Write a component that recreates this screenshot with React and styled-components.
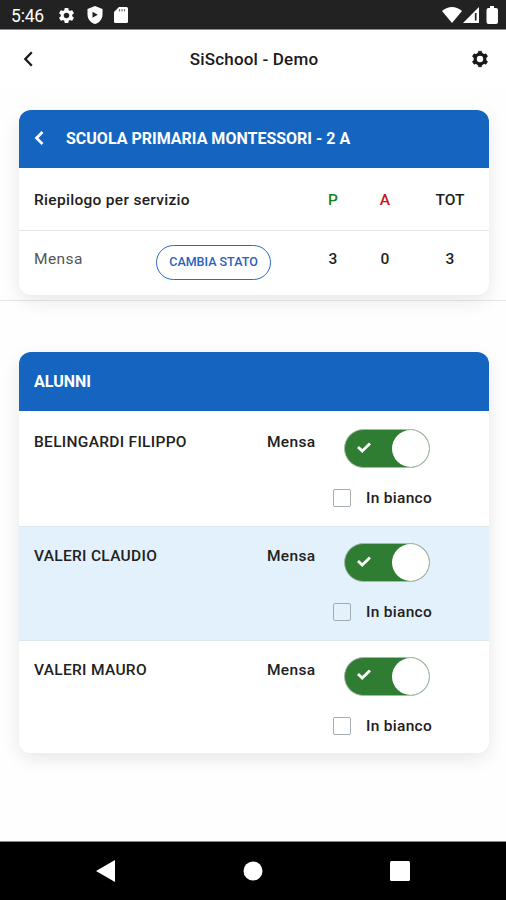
import styled, { createGlobalStyle } from "styled-components";
import { MdSettings } from "react-icons/md";

const GlobalStyle = createGlobalStyle`
  * {
    box-sizing: border-box;
  }
  body {
    margin: 0;
    background: #fefefe;
    font-family: Roboto, sans-serif;
    color: #212121;
  }
  button {
    font-family: inherit;
    padding: 0;
    border: 0;
    background: none;
  }
`;

const Screen = styled.div`
  display: flex;
  flex-direction: column;
  width: 506px;
  height: 900px;
  overflow: hidden;
`;

const StatusBar = styled.div`
  display: flex;
  align-items: center;
  justify-content: space-between;
  height: 30px;
  padding: 1px 7px 0 11px;
  background: #222;
  border-bottom: 1px solid #8b8b8b;
  color: #fff;
`;

const StatusGroup = styled.div`
  display: flex;
  align-items: center;
  gap: ${(props) => props.$gap}px;
`;

const Clock = styled.span`
  width: 35px;
  margin-top: 2px;
  font-size: 17.5px;
  letter-spacing: -0.2px;
`;

const Icon = styled.svg`
  display: block;
  flex-shrink: 0;
`;

const Header = styled.header`
  display: grid;
  grid-template-columns: 24px 1fr 20px;
  align-items: center;
  height: 60px;
  padding: 0 16px 2px 16px;
  border-bottom: 1px solid #fbfbfb;
  background: #fff;
  color: #1a1a1a;
`;

const Title = styled.h1`
  margin: 0 2px 0 0;
  font-size: 17px;
  font-weight: 500;
  letter-spacing: 0.18px;
  text-align: center;
`;

const Summary = styled.section`
  height: 211px;
  padding: 20px 17px 0 19px;
  border-bottom: 1px solid #e6e6e6;
`;

const Students = styled.section`
  flex: 1;
  padding: 51px 17px 0 19px;
`;

const Card = styled.div`
  overflow: hidden;
  border-radius: 12px;
  background: #fff;
  box-shadow: 0 6px 18px rgba(0, 0, 0, 0.09);
`;

const CardHeader = styled.div`
  display: flex;
  align-items: center;
  gap: 20px;
  height: ${(props) => props.$height}px;
  padding: 0 15px;
  padding-bottom: ${(props) => props.$lift || 0}px;
  background: #1565c0;
  color: #fff;
`;

const CardTitle = styled.h2`
  margin: 0;
  font-size: 16px;
  font-weight: 700;
`;

const SummaryRow = styled.div`
  display: grid;
  grid-template-columns: 122px 159px 36px 68px 62px;
  align-items: center;
  height: ${(props) => props.$height}px;
  padding: 1px 8px 0 15px;
  border-top: ${(props) => (props.$line ? "1px solid #e4e9ec" : "0")};
`;

const RowTitle = styled.span`
  grid-column: span 2;
  font-size: 15.5px;
  font-weight: 500;
  letter-spacing: 0.3px;
`;

const Service = styled.span`
  margin-top: -10px;
  color: #555;
  font-size: 15.5px;
  letter-spacing: 0.4px;
`;

const Count = styled.span`
  margin-top: ${(props) => props.$offset || 0}px;
  color: ${(props) => props.$color || "#1f1f1f"};
  font-size: 15.5px;
  font-weight: 500;
  text-align: center;
`;

const StateButton = styled.button`
  width: 115px;
  height: 35px;
  margin-top: -3px;
  padding-bottom: 2px;
  border: 1px solid #2e68c0;
  border-radius: 18px;
  color: #2860c0;
  font-size: 12.5px;
  font-weight: 500;
`;

const Student = styled.div`
  display: grid;
  grid-template-columns: 233px 1fr;
  height: ${(props) => props.$height}px;
  padding: ${(props) => (props.$line ? 16 : 18)}px 0 0 15px;
  border-top: ${(props) => (props.$line ? "1px solid #dde7ee" : "0")};
  background: ${(props) => (props.$tinted ? "#e3f1fd" : "#fff")};
`;

const StudentName = styled.span`
  margin-top: 4px;
  font-size: 15.5px;
  font-weight: 500;
  line-height: 18px;
  letter-spacing: 0.3px;
`;

const ToggleRow = styled.div`
  display: grid;
  grid-template-columns: 77px 88px;
  align-items: start;
`;

const Label = styled.span`
  margin-top: ${(props) => props.$offset || 0}px;
  font-size: 15.5px;
  font-weight: 500;
  line-height: 18px;
  letter-spacing: 0.3px;
`;

const Toggle = styled.button`
  display: flex;
  align-items: center;
  justify-content: space-between;
  width: 86px;
  height: 39px;
  padding-left: 12px;
  border: 1px solid #aeb5ae;
  border-radius: 20px;
  background: #2e7d32;
`;

const Tick = styled(Icon)`
  margin-bottom: 2px;
`;

const Knob = styled.span`
  width: 37px;
  height: 37px;
  border-radius: 50%;
  background: #fff;
`;

const CheckRow = styled.label`
  display: flex;
  align-items: center;
  gap: 15px;
  margin: 21px 0 0 66px;
`;

const Box = styled.span`
  width: 18px;
  height: 18px;
  border: 1.5px solid #a4adb3;
  border-radius: 2px;
`;

const NavBar = styled.nav`
  display: flex;
  align-items: center;
  justify-content: space-between;
  height: 59px;
  padding: 0 96px;
  border-top: 1px solid #888;
  background: #000;
`;

const BackIcon = () => (
  <Icon width="24" height="24" viewBox="0 0 24 24" fill="none">
    <path d="M15.8 5.3 9.3 12l6.5 6.7" stroke="currentColor" strokeWidth="2.3" />
  </Icon>
);

const CardBackIcon = () => (
  <Icon width="12" height="24" viewBox="0 0 12 24" fill="none">
    <path d="M8.5 6 2.5 12l6 6" stroke="currentColor" strokeWidth="2.7" />
  </Icon>
);

const teeth = [0, 60, 120, 180, 240, 300];

const GearIcon = () => (
  <Icon width="20" height="20" viewBox="0 0 20 20">
    <circle cx="10" cy="10" r="4.8" fill="none" stroke="currentColor" strokeWidth="3.2" />
    {teeth.map((angle) => (
      <path
        key={angle}
        d="M8 5.2 8.5 2.2h3l.5 3Z"
        fill="currentColor"
        stroke="currentColor"
        strokeWidth="0.6"
        strokeLinejoin="round"
        transform={`rotate(${angle} 10 10)`}
      />
    ))}
  </Icon>
);

const students = [
  { name: "BELINGARDI FILIPPO", height: 115 },
  { name: "VALERI CLAUDIO", height: 113.5, tinted: true },
  { name: "VALERI MAURO", height: 113.5 },
];

const StudentRow = ({ student, line }) => (
  <Student $height={student.height} $tinted={student.tinted} $line={line}>
    <StudentName>{student.name}</StudentName>
    <div>
      <ToggleRow>
        <Label $offset={4}>Mensa</Label>
        <Toggle aria-label="Mensa">
          <Tick width="14" height="12" viewBox="0 0 14 12" fill="none">
            <path d="m1 5 4.2 4L13 1.5" stroke="#fff" strokeWidth="2.8" />
          </Tick>
          <Knob />
        </Toggle>
      </ToggleRow>
      <CheckRow>
        <Box />
        <Label>In bianco</Label>
      </CheckRow>
    </div>
  </Student>
);

const App = () => {
  return (
    <Screen>
      <GlobalStyle />
      <StatusBar>
        <StatusGroup $gap={11}>
          <Clock>5:46</Clock>
          <MdSettings size={19} />
          <Icon width="16" height="18" viewBox="0 0 16 18">
            <path d="M8 0 .5 3v5.5C.5 13 3.7 16.8 8 18c4.3-1.2 7.5-5 7.5-9.5V3Z" fill="#fff" />
            <path d="M5.5 5.8v6l5.3-3Z" fill="#222" />
          </Icon>
          <Icon width="14" height="16" viewBox="0 0 14 16">
            <path d="M5 0h7.5Q14 0 14 1.5v13q0 1.5-1.5 1.5h-11Q0 16 0 14.5V5Z" fill="#fff" />
            <path d="M5.5 2v2.5M8 2v2.5M10.5 2v2.5" stroke="#777" strokeWidth="1.2" />
          </Icon>
        </StatusGroup>
        <StatusGroup $gap={1}>
          <Icon width="20" height="16" viewBox="0 0 20 16">
            <path d="M0 4Q10-4 20 4L10 16Z" fill="#fff" />
          </Icon>
          <Icon width="16" height="16" viewBox="0 0 16 16">
            <path d="M16 0v16H0Z" fill="#fff" />
            <path d="M12.7 6v7.5" stroke="#222" strokeWidth="1.7" />
          </Icon>
          <Icon width="19" height="18" viewBox="0 0 19 18">
            <path d="M10 0h4v2h2q2 0 2 2v12q0 2-2 2H8.5q-2 0-2-2V4q0-2 2-2H10Z" fill="#fff" />
          </Icon>
        </StatusGroup>
      </StatusBar>

      <Header>
        <BackIcon />
        <Title>SiSchool - Demo</Title>
        <GearIcon />
      </Header>

      <Summary>
        <Card>
          <CardHeader $height={58} $lift={2}>
            <CardBackIcon />
            <CardTitle>SCUOLA PRIMARIA MONTESSORI - 2 A</CardTitle>
          </CardHeader>
          <SummaryRow $height={62}>
            <RowTitle>Riepilogo per servizio</RowTitle>
            <Count $color="#1b8020">P</Count>
            <Count $color="#c4151c">A</Count>
            <Count>TOT</Count>
          </SummaryRow>
          <SummaryRow $height={65} $line>
            <Service>Mensa</Service>
            <StateButton>CAMBIA STATO</StateButton>
            <Count $offset={-10}>3</Count>
            <Count $offset={-10}>0</Count>
            <Count $offset={-10}>3</Count>
          </SummaryRow>
        </Card>
      </Summary>

      <Students>
        <Card>
          <CardHeader $height={59}>
            <CardTitle>ALUNNI</CardTitle>
          </CardHeader>
          {students.map((student, index) => (
            <StudentRow key={student.name} student={student} line={index > 0} />
          ))}
        </Card>
      </Students>

      <NavBar>
        <Icon width="19" height="22" viewBox="0 0 19 22">
          <path d="M19 0v22L0 11Z" fill="#fff" />
        </Icon>
        <Icon width="20" height="20" viewBox="0 0 20 20">
          <circle cx="10" cy="10" r="9.5" fill="#fff" />
        </Icon>
        <Icon width="20" height="20" viewBox="0 0 20 20">
          <rect width="20" height="20" rx="1.5" fill="#fff" />
        </Icon>
      </NavBar>
    </Screen>
  );
};

export default App;
